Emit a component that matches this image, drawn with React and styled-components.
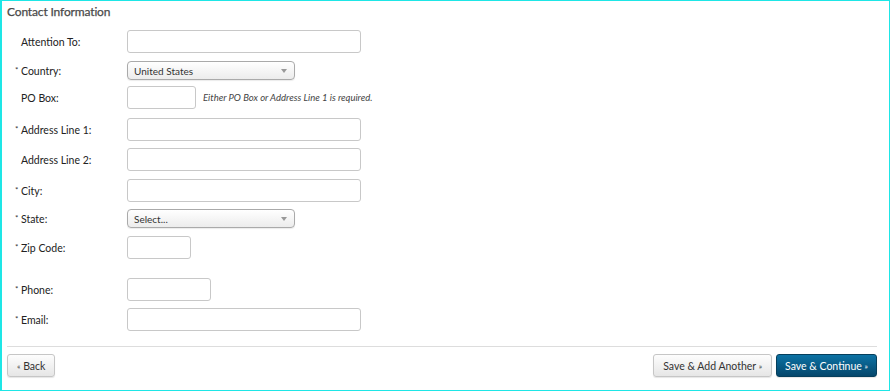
import React from "react";
import styled, { createGlobalStyle } from "styled-components";

const Global = createGlobalStyle`
  html, body {
    margin: 0;
    padding: 0;
    background: #fff;
  }
  body {
    font-family: Lato, "Liberation Sans", Arial, sans-serif;
  }
`;

const Frame = styled.div`
  box-sizing: border-box;
  width: 890px;
  height: 391px;
  border: 1px solid #1ee6e6;
  border-left-width: 2px;
  padding: 3px 12px 0 5px;
`;

const Title = styled.h2`
  margin: 0;
  font-size: 12px;
  font-weight: 400;
  letter-spacing: -0.15px;
  color: #4a4a4a;
  line-height: 16px;
  -webkit-text-stroke: 0.25px #4a4a4a;
`;

const Fields = styled.div`
  display: flex;
  flex-direction: column;
  padding-top: 10px;
`;

const Row = styled.div`
  display: flex;
  align-items: center;
  margin-top: ${(p) => p.$mt || 0}px;
`;

const Label = styled.label`
  display: flex;
  align-items: flex-start;
  width: 120px;
  padding-left: 8px;
  box-sizing: border-box;
  font-size: 10.5px;
  color: #222;
`;

const Star = styled.span`
  width: 6px;
  font-size: 8px;
  line-height: 8px;
  padding-top: 1px;
  color: #333;
`;

const TextInput = styled.input`
  box-sizing: border-box;
  width: ${(p) => p.$w || 234}px;
  height: 23px;
  border: 1px solid #c8c8c8;
  border-radius: 3px;
  background: #fff;
  padding: 0 5px;
  font-family: inherit;
  font-size: 11px;
`;

const SelectBox = styled.div`
  box-sizing: border-box;
  display: flex;
  align-items: center;
  justify-content: space-between;
  width: 168px;
  height: 19px;
  padding: 0 7px 0 6px;
  border: 1px solid #aaa;
  border-radius: 4px;
  background: linear-gradient(#ffffff, #ececec);
  box-shadow: 0 1px 1px rgba(0, 0, 0, 0.08);
  font-size: 10px;
  color: #333;
`;

const Arrow = styled.span`
  width: 0;
  height: 0;
  border-left: 3px solid transparent;
  border-right: 3px solid transparent;
  border-top: 4px solid #999;
`;

const Hint = styled.span`
  margin-left: 7px;
  font-size: 9.5px;
  font-style: italic;
  color: #444;
`;

const Divider = styled.hr`
  margin: 15px 0 0;
  border: 0;
  border-top: 1px solid #ddd;
`;

const Actions = styled.div`
  display: flex;
  align-items: center;
  padding-top: 7px;
`;

const Spacer = styled.div`
  flex: 1;
`;

const Button = styled.button`
  box-sizing: border-box;
  height: 23px;
  padding: 0 ${(p) => (p.$primary ? 8 : 9)}px;
  margin-left: ${(p) => (p.$primary ? 4 : 0)}px;
  border-radius: 3px;
  font-family: inherit;
  font-size: 10.5px;
  border: 1px solid ${(p) => (p.$primary ? "#063f5c" : "#c6c6c6")};
  color: ${(p) => (p.$primary ? "#fff" : "#333")};
  background: ${(p) =>
    p.$primary
      ? "linear-gradient(#0c72a4, #05476c)"
      : "linear-gradient(#fdfdfd, #e6e6e6)"};
  box-shadow: 0 1px 1px rgba(0, 0, 0, 0.1);
`;

const Chev = styled.span`
  font-size: 8px;
  vertical-align: 1px;
`;

function Field({ label, required, mt, children }) {
  return (
    <Row $mt={mt}>
      <Label>
        <Star>{required ? "*" : ""}</Star>
        {label}
      </Label>
      {children}
    </Row>
  );
}

export default function App() {
  return (
    <>
      <Global />
      <Frame>
        <Title>Contact Information</Title>
        <Fields>
          <Field label="Attention To:">
            <TextInput />
          </Field>
          <Field label="Country:" required mt={8}>
            <SelectBox>
              United States
              <Arrow />
            </SelectBox>
          </Field>
          <Field label="PO Box:" mt={6}>
            <TextInput $w={69} />
            <Hint>Either PO Box or Address Line 1 is required.</Hint>
          </Field>
          <Field label="Address Line 1:" required mt={9}>
            <TextInput />
          </Field>
          <Field label="Address Line 2:" mt={7}>
            <TextInput />
          </Field>
          <Field label="City:" required mt={8}>
            <TextInput />
          </Field>
          <Field label="State:" required mt={7}>
            <SelectBox>
              Select...
              <Arrow />
            </SelectBox>
          </Field>
          <Field label="Zip Code:" required mt={8}>
            <TextInput $w={64} />
          </Field>
          <Field label="Phone:" required mt={19}>
            <TextInput $w={84} />
          </Field>
          <Field label="Email:" required mt={7}>
            <TextInput />
          </Field>
        </Fields>
        <Divider />
        <Actions>
          <Button>
            <Chev>«</Chev> Back
          </Button>
          <Spacer />
          <Button>
            Save &amp; Add Another <Chev>»</Chev>
          </Button>
          <Button $primary>
            Save &amp; Continue <Chev>»</Chev>
          </Button>
        </Actions>
      </Frame>
    </>
  );
}
